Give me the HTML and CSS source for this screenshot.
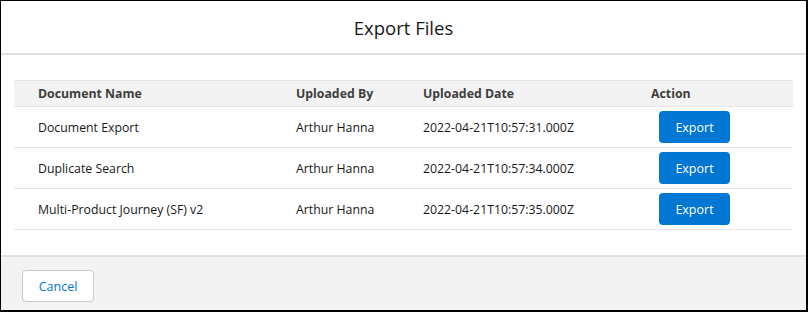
FILE: index.html
```html
<!DOCTYPE html>
<html lang="en">
<head>
  <meta charset="UTF-8">
  <title>Export Files</title>
  <link rel="stylesheet" href="styles.css">
</head>
<body>

  <!-- Modal -->
  <div class="modal">
    <div class="modal-header">
      <h2>Export Files</h2>
    </div>

    <div class="modal-body">
      <div class="tabla">
        <div class="fila cabecera">
          <div class="celda primera">Document Name</div>
          <div class="celda">Uploaded By</div>
          <div class="celda">Uploaded Date</div>
          <div class="celda">Action</div>
        </div>
        <div class="fila">
          <div class="celda primera">Document Export</div>
          <div class="celda">Arthur Hanna</div>
          <div class="celda">2022-04-21T10:57:31.000Z</div>
          <div class="celda"><button class="btn-export">Export</button></div>
        </div>
        <div class="fila">
          <div class="celda primera">Duplicate Search</div>
          <div class="celda">Arthur Hanna</div>
          <div class="celda">2022-04-21T10:57:34.000Z</div>
          <div class="celda"><button class="btn-export">Export</button></div>
        </div>
        <div class="fila">
          <div class="celda primera">Multi-Product Journey (SF) v2</div>
          <div class="celda">Arthur Hanna</div>
          <div class="celda">2022-04-21T10:57:35.000Z</div>
          <div class="celda"><button class="btn-export">Export</button></div>
        </div>
      </div>
    </div>

    <div class="modal-footer">
      <button class="btn-cancel">Cancel</button>
    </div>
  </div>

</body>
</html>
```

FILE: styles.css
```css
body {
  margin: 0;
  padding: 0;
  font-family: 'Open Sans', 'Noto Sans', sans-serif;
  color: #181818;
  background: #fff;
}

.modal {
  width: 808px;
  height: 312px;
  box-sizing: border-box;
  border-style: solid;
  border-color: #000;
  border-width: 1px 2px 2px 1px;
  display: flex;
  flex-direction: column;
}

.modal-header {
  height: 52px;
  border-bottom: 2px solid #e0e0e0;
  display: flex;
  justify-content: center;
  align-items: center;
}

.modal-header h2 {
  margin: 0;
  font-weight: normal;
  font-size: 18.5px;
  color: #181818;
}

.modal-body {
  padding: 25px 13px;
}

.tabla {
  border-top: 1px solid #e5e5e5;
  font-size: 12.3px;
}

.fila {
  display: grid;
  grid-template-columns: 274px 127px 228px 1fr;
  align-items: center;
  height: 40px;
  border-bottom: 1px solid #e5e5e5;
}

.cabecera {
  height: 25px;
  background-color: #f3f3f3;
  font-weight: bold;
  color: #3e3e3c;
}

.celda {
  padding-left: 8px;
  white-space: nowrap;
}

.celda.primera {
  padding-left: 24px;
}

.btn-export {
  margin-left: 8px;
  width: 71px;
  height: 32px;
  background-color: #0176d3;
  color: #fff;
  border: none;
  border-radius: 4px;
  font-family: inherit;
  font-size: 12.5px;
  cursor: pointer;
}

.modal-footer {
  flex: 1;
  background-color: #f3f3f3;
  border-top: 2px solid #e0e0e0;
  padding: 13px 21px 0;
}

.btn-cancel {
  width: 72px;
  height: 32px;
  background: #fff;
  color: #0176d3;
  border: 1px solid #c9c9c9;
  border-radius: 4px;
  font-family: inherit;
  font-size: 12.5px;
  cursor: pointer;
}
```
